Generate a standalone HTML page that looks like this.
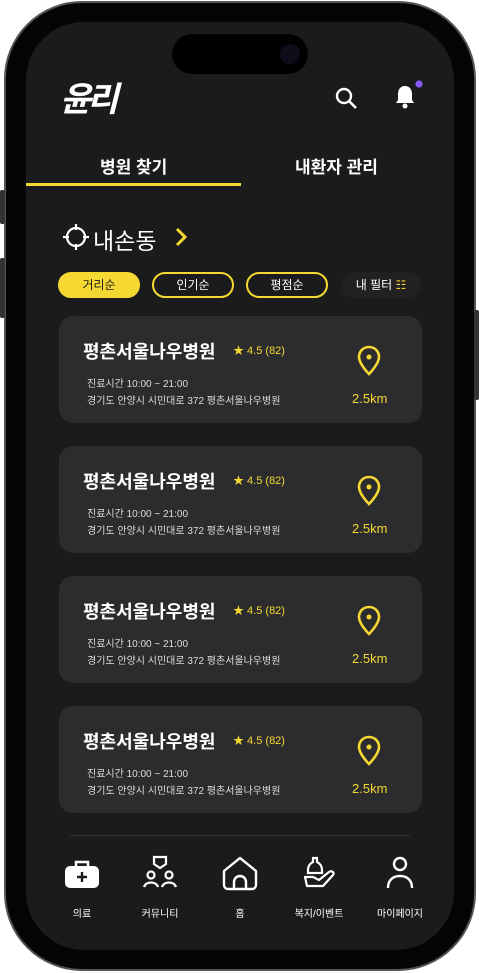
<!DOCTYPE html><html><head><meta charset="utf-8"><style>
*{margin:0;padding:0;box-sizing:border-box}
body{width:479px;height:973px;background:#fff;position:relative;overflow:hidden;font-family:"Liberation Sans","Noto Sans CJK KR",sans-serif;color:#fff}
.phone{position:absolute;left:4px;top:1px;width:472px;height:970px;border-radius:78px;background:#050505;border:2px solid #555}
.screen{position:absolute;left:26px;top:22px;width:428px;height:928px;border-radius:58px;background:#1b1b1b;overflow:hidden}
.island{position:absolute;left:172px;top:34px;width:136px;height:40px;border-radius:20px;background:#000}
.abs{position:absolute}
.card{position:absolute;left:59px;width:363px;height:107px;border-radius:14px;background:#2c2c2e}
.card .t{position:absolute;left:24px;top:22px;font-size:18px;font-weight:bold}
.card .r{position:absolute;left:174px;top:26px;font-size:11px;color:#f5d932}
.card .l1{position:absolute;left:28px;top:59px;font-size:10px;color:#ddd}
.card .l2{position:absolute;left:28px;top:76px;font-size:10px;color:#ddd}
.card .km{position:absolute;left:293px;top:75px;font-size:13px;color:#f5d932}
.card svg{position:absolute;left:297px;top:29px}
.chip{position:absolute;top:272px;height:26px;border-radius:13px;font-size:12px;text-align:center;line-height:22px;border:2px solid #f5d932}
.nav{position:absolute;top:905px;font-size:10px;text-align:center;width:70px}
</style></head><body>
<div class="phone"></div>
<div class="abs" style="left:0;top:190px;width:5px;height:34px;background:#333;border-radius:2px"></div>
<div class="abs" style="left:0;top:258px;width:5px;height:60px;background:#333;border-radius:2px"></div>
<div class="abs" style="left:474px;top:310px;width:5px;height:90px;background:#333;border-radius:2px"></div>
<div class="screen"></div>
<div class="island"></div>
<div class="abs" style="left:280px;top:44px;width:20px;height:20px;border-radius:50%;background:#0d0d1a"></div>
<div class="abs" style="left:60px;top:72px;font-size:34px;font-weight:bold;font-style:italic;letter-spacing:-4px">윤리</div>
<svg class="abs" style="left:334px;top:86px" width="26" height="26" viewBox="0 0 26 26"><circle cx="10" cy="10" r="7" fill="none" stroke="#fff" stroke-width="2.4"/><path d="M15 15l7 7" stroke="#fff" stroke-width="2.6"/></svg>
<svg class="abs" style="left:392px;top:80px" width="32" height="32" viewBox="0 0 32 32"><path d="M13 6c-5 0-7 4-7 8v6l-2 3h18l-2-3v-6c0-4-2-8-7-8z" fill="#fff"/><circle cx="13" cy="26" r="2.5" fill="#fff"/><circle cx="27" cy="4" r="3.6" fill="#8a5cf6"/></svg>
<div class="abs" style="left:100px;top:153px;font-size:17px;font-weight:bold">병원 찾기</div>
<div class="abs" style="left:295px;top:153px;font-size:17px;font-weight:bold">내환자 관리</div>
<div class="abs" style="left:26px;top:183px;width:215px;height:3px;background:#f5d932"></div>
<svg class="abs" style="left:62px;top:223px" width="28" height="28" viewBox="0 0 28 28"><circle cx="14" cy="14" r="9" fill="none" stroke="#fff" stroke-width="2.2"/><path d="M14 1v6M14 21v6M1 14h6M21 14h6" stroke="#fff" stroke-width="2.2"/></svg>
<div class="abs" style="left:93px;top:222px;font-size:23px">내손동</div>
<svg class="abs" style="left:174px;top:227px" width="14" height="20" viewBox="0 0 14 20"><path d="M3 2l8 8-8 8" fill="none" stroke="#f5d932" stroke-width="3"/></svg>
<div class="chip" style="left:58px;width:82px;background:#f5d932;color:#1b1b1b">거리순</div>
<div class="chip" style="left:152px;width:82px;color:#fff">인기순</div>
<div class="chip" style="left:246px;width:82px;color:#fff">평점순</div>
<div class="chip" style="left:341px;width:80px;border:none;background:#222020;line-height:26px;color:#fff">내 필터 <span style="color:#f5d932">☷</span></div>

<div class="card" style="top:316px"><div class="t">평촌서울나우병원</div><div class="r">★ 4.5 (82)</div><div class="l1">진료시간 10:00 ~ 21:00</div><div class="l2">경기도 안양시 시민대로 372 평촌서울나우병원</div><svg width="26" height="32" viewBox="0 0 26 32"><path d="M13 2C7 2 3 6.5 3 12c0 7 10 17 10 17s10-10 10-17C23 6.5 19 2 13 2z" fill="none" stroke="#f5d932" stroke-width="2.6"/><circle cx="13" cy="12" r="2.5" fill="#f5d932"/></svg><div class="km">2.5km</div></div>
<div class="card" style="top:446px"><div class="t">평촌서울나우병원</div><div class="r">★ 4.5 (82)</div><div class="l1">진료시간 10:00 ~ 21:00</div><div class="l2">경기도 안양시 시민대로 372 평촌서울나우병원</div><svg width="26" height="32" viewBox="0 0 26 32"><path d="M13 2C7 2 3 6.5 3 12c0 7 10 17 10 17s10-10 10-17C23 6.5 19 2 13 2z" fill="none" stroke="#f5d932" stroke-width="2.6"/><circle cx="13" cy="12" r="2.5" fill="#f5d932"/></svg><div class="km">2.5km</div></div>
<div class="card" style="top:576px"><div class="t">평촌서울나우병원</div><div class="r">★ 4.5 (82)</div><div class="l1">진료시간 10:00 ~ 21:00</div><div class="l2">경기도 안양시 시민대로 372 평촌서울나우병원</div><svg width="26" height="32" viewBox="0 0 26 32"><path d="M13 2C7 2 3 6.5 3 12c0 7 10 17 10 17s10-10 10-17C23 6.5 19 2 13 2z" fill="none" stroke="#f5d932" stroke-width="2.6"/><circle cx="13" cy="12" r="2.5" fill="#f5d932"/></svg><div class="km">2.5km</div></div>
<div class="card" style="top:706px"><div class="t">평촌서울나우병원</div><div class="r">★ 4.5 (82)</div><div class="l1">진료시간 10:00 ~ 21:00</div><div class="l2">경기도 안양시 시민대로 372 평촌서울나우병원</div><svg width="26" height="32" viewBox="0 0 26 32"><path d="M13 2C7 2 3 6.5 3 12c0 7 10 17 10 17s10-10 10-17C23 6.5 19 2 13 2z" fill="none" stroke="#f5d932" stroke-width="2.6"/><circle cx="13" cy="12" r="2.5" fill="#f5d932"/></svg><div class="km">2.5km</div></div>

<div class="abs" style="left:70px;top:835px;width:340px;height:1px;background:#333"></div>

<svg class="abs" style="left:64px;top:858px" width="36" height="32" viewBox="0 0 36 32"><path d="M12 8V4h12v4" fill="none" stroke="#fff" stroke-width="2.5"/><rect x="1" y="8" width="34" height="22" rx="5" fill="#fff"/><path d="M18 14v10M13 19h10" stroke="#1b1b1b" stroke-width="2.4"/></svg>
<svg class="abs" style="left:140px;top:854px" width="40" height="36" viewBox="0 0 40 36"><path d="M14 3h12v7l-6 4-6-4z" fill="none" stroke="#fff" stroke-width="2.2"/><circle cx="11" cy="21" r="3.5" fill="none" stroke="#fff" stroke-width="2.2"/><circle cx="29" cy="21" r="3.5" fill="none" stroke="#fff" stroke-width="2.2"/><path d="M4 33c2-6 12-6 14 0M22 33c2-6 12-6 14 0" fill="none" stroke="#fff" stroke-width="2.2"/></svg>
<svg class="abs" style="left:221px;top:855px" width="38" height="36" viewBox="0 0 38 36"><path d="M3 16L19 3l16 13v14a4 4 0 0 1-4 4H7a4 4 0 0 1-4-4z" fill="none" stroke="#fff" stroke-width="2.4" stroke-linejoin="round"/><path d="M13 34v-7a6 6 0 0 1 12 0v7" fill="none" stroke="#fff" stroke-width="2.4"/></svg>
<svg class="abs" style="left:301px;top:855px" width="36" height="36" viewBox="0 0 36 36"><path d="M11 3h6M12 3v4c-4 2-5 5-5 8v3h14v-3c0-3-1-6-5-8V3" fill="none" stroke="#fff" stroke-width="2.2"/><path d="M4 22h8l6 3 10-8c3-2 6 1 4 3l-10 11H6z" fill="none" stroke="#fff" stroke-width="2.2" stroke-linejoin="round"/></svg>
<svg class="abs" style="left:384px;top:854px" width="32" height="36" viewBox="0 0 32 36"><circle cx="16" cy="10" r="6" fill="none" stroke="#fff" stroke-width="2.4"/><path d="M4 34c0-8 5-12 12-12s12 4 12 12" fill="none" stroke="#fff" stroke-width="2.4"/></svg>

<div class="nav" style="left:47px">의료</div>
<div class="nav" style="left:125px">커뮤니티</div>
<div class="nav" style="left:205px">홈</div>
<div class="nav" style="left:284px">복지/이벤트</div>
<div class="nav" style="left:365px">마이페이지</div>
</body></html>
